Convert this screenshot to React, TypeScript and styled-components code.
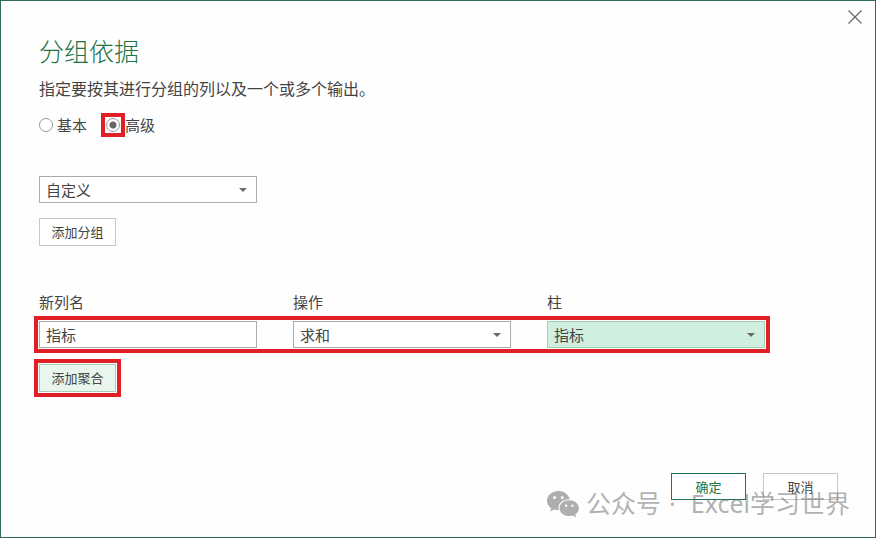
import React from "react";
import styled, { createGlobalStyle, css } from "styled-components";

const GlobalStyle = createGlobalStyle`
  *, *::before, *::after { box-sizing: border-box; }
  body {
    margin: 0;
    background: #fefefe;
    color: #444;
    font-family: "Noto Sans CJK SC", sans-serif;
    font-weight: 400;
    font-size: 15px;
    line-height: 24px;
  }
  button, input, select { font: inherit; color: inherit; }
`;

const Dialog = styled.form`
  position: relative;
  display: flex;
  flex-direction: column;
  min-height: 100vh;
  padding: 33px 37px 37px 38px;
  border: 1px solid #2f6b55;
`;

const CloseButton = styled.button`
  position: absolute;
  top: 6px;
  right: 10px;
  width: 20px;
  height: 20px;
  padding: 0;
  display: grid;
  place-items: center;
  border: 0;
  background: none;
  color: #666;
`;

const Title = styled.h1`
  margin: 0;
  color: #217346;
  font-size: 25px;
  font-weight: 300;
  line-height: 32px;
`;

const Description = styled.p`
  margin: 10px 0 0;
  font-size: 16px;
`;

const Modes = styled.div`
  display: flex;
  align-items: center;
  margin-top: 12px;
  gap: 14px;
`;

const Mode = styled.label<{ $gap: number }>`
  display: flex;
  align-items: center;
  gap: ${(p) => p.$gap}px;
  line-height: 26px;
`;

const Radio = styled.input`
  appearance: none;
  width: 14px;
  height: 14px;
  margin: 0;
  border: 1px solid #999;
  border-radius: 50%;
  background: #fff;
  &:checked {
    background: radial-gradient(circle, #666 0 3px, #fff 4px);
  }
`;

const outline = css`
  border: 4px solid #e01f27;
`;

const RadioMark = styled.span`
  ${outline}
  display: grid;
  place-items: center;
  width: 24px;
  height: 24px;
`;

const Grouping = styled.section`
  display: flex;
  flex-direction: column;
  align-items: flex-start;
  gap: 15px;
  margin: 38px 73px 0 0;
`;

const Columns = styled.div`
  display: grid;
  grid-template-columns: repeat(3, minmax(0, 1fr));
  column-gap: 36px;
  width: 100%;
`;

const Aggregation = styled.section`
  display: flex;
  flex-direction: column;
  align-items: flex-start;
  margin: 44px 68px 0 -5px;
`;

const Headers = styled(Columns)`
  padding: 0 5px;
  margin-bottom: 2px;
`;

const MarkedRow = styled(Columns)`
  ${outline}
  padding: 1px;
`;

const MarkedButton = styled.div`
  ${outline}
  padding: 1px;
  margin-top: 6px;
`;

const field = css`
  width: 100%;
  height: 27px;
  margin: 0;
  padding: 0 6px;
  border: 1px solid #ababab;
  border-radius: 0;
  background: #fff;
  outline: none;
`;

const TextField = styled.input`
  ${field}
`;

const SelectBox = styled.div`
  position: relative;
`;

const Select = styled.select<{ $active?: boolean }>`
  ${field}
  display: block;
  appearance: none;
  padding-right: 24px;
  ${(p) => p.$active && "background: #d0efe0; border-color: #9fd0b4;"}
`;

const Caret = styled.svg`
  position: absolute;
  right: 10px;
  top: 12px;
  pointer-events: none;
`;

const Button = styled.button<{ $tone?: "hover" | "primary" }>`
  appearance: none;
  display: block;
  height: 28px;
  min-width: 77px;
  padding: 0 11px;
  border: 1px solid #c6c6c6;
  border-radius: 0;
  background: #fff;
  font-size: 13px;
  line-height: 20px;
  ${(p) => p.$tone === "hover" && "background: #e8f6ee; border-color: #a5ceb6;"}
  ${(p) => p.$tone === "primary" && "border-color: #217356; color: #217346;"}
`;

const Footer = styled.footer`
  display: flex;
  justify-content: flex-end;
  gap: 17px;
  margin-top: auto;
  ${Button} {
    width: 75px;
    min-width: 0;
    height: 27px;
  }
`;

const Watermark = styled.div`
  position: absolute;
  right: 25px;
  bottom: 16px;
  display: flex;
  align-items: center;
  color: rgba(110, 110, 110, 0.55);
  font-family: "Noto Sans", "Noto Sans CJK SC", sans-serif;
  font-size: 25px;
  line-height: 36px;
  white-space: nowrap;
  pointer-events: none;
`;

const Separator = styled.span`
  margin: 0 15px 0 8px;
`;

const Logo = styled.svg`
  margin: 2px 6px 0 0;
`;

function Dropdown({ id, label, value, active }: { id: string; label?: string; value: string; active?: boolean }) {
  return (
    <SelectBox>
      <Select id={id} aria-label={label} $active={active} defaultValue={value}>
        <option>{value}</option>
      </Select>
      <Caret width="8" height="4" viewBox="0 0 8 4" aria-hidden="true">
        <path d="M0 0h8L4 4z" fill="#6b6b6b" />
      </Caret>
    </SelectBox>
  );
}

function ChatLogo() {
  return (
    <Logo width="33" height="27" viewBox="0 0 33 27" fill="#aeaeae" aria-hidden="true">
      <path
        fillRule="evenodd"
        d="M11.5 0C5.100 0 0 4.300 0 9.700c0 3 1.600 5.700 4.200 7.500L3.200 20.500l3.800-2c1.400.5 3 .7 4.900.7a7.500 7.500 0 0 1-.4-2.400c0-4.900 4.600-8.500 10.300-8.500h.9C21.600 3.500 17 0 11.500 0ZM7.600 5a1.500 1.500 0 1 1 0 3 1.500 1.500 0 0 1 0-3Zm7.700 0a1.500 1.500 0 1 1 0 3 1.500 1.500 0 0 1 0-3Z"
      />
      <path
        fillRule="evenodd"
        d="M22.200 9.300c-5.400 0-9.600 3.500-9.600 7.900s4.200 7.900 9.600 7.900c1.300 0 2.500-.2 3.600-.6l3.300 1.900-.9-2.900c2.200-1.500 3.700-3.700 3.700-6.300 0-4.400-4.300-7.900-9.700-7.900Zm-3.100 4.200a1.200 1.200 0 1 1 0 2.400 1.200 1.200 0 0 1 0-2.400Zm6.300 0a1.200 1.200 0 1 1 0 2.400 1.200 1.200 0 0 1 0-2.400Z"
      />
    </Logo>
  );
}

export default function App() {
  return (
    <>
      <GlobalStyle />
      <Dialog onSubmit={(e: React.FormEvent) => e.preventDefault()}>
        <CloseButton type="button" aria-label="关闭">
          <svg width="14" height="14" viewBox="0 0 14 14" stroke="currentColor" strokeWidth="1.200" aria-hidden="true">
            <path d="M.5.5l13 13M13.500.5l-13 13" />
          </svg>
        </CloseButton>
        <Title>分组依据</Title>
        <Description>指定要按其进行分组的列以及一个或多个输出。</Description>
        <Modes>
          <Mode $gap={4}>
            <Radio type="radio" name="mode" />
            基本
          </Mode>
          <Mode $gap={0}>
            <RadioMark>
              <Radio type="radio" name="mode" defaultChecked />
            </RadioMark>
            高级
          </Mode>
        </Modes>

        <Grouping>
          <Columns>
            <Dropdown id="group-column" label="分组列" value="自定义" />
          </Columns>
          <Button type="button">添加分组</Button>
        </Grouping>

        <Aggregation>
          <Headers>
            <label htmlFor="column-name">新列名</label>
            <label htmlFor="operation">操作</label>
            <label htmlFor="column">柱</label>
          </Headers>
          <MarkedRow>
            <TextField id="column-name" defaultValue="指标" />
            <Dropdown id="operation" value="求和" />
            <Dropdown id="column" value="指标" active />
          </MarkedRow>
          <MarkedButton>
            <Button type="button" $tone="hover">添加聚合</Button>
          </MarkedButton>
        </Aggregation>

        <Footer>
          <Button type="button" $tone="primary">确定</Button>
          <Button type="button">取消</Button>
        </Footer>

        <Watermark>
          <ChatLogo />
          <span>公众号</span>
          <Separator>·</Separator>
          <span>Excel学习世界</span>
        </Watermark>
      </Dialog>
    </>
  );
}
